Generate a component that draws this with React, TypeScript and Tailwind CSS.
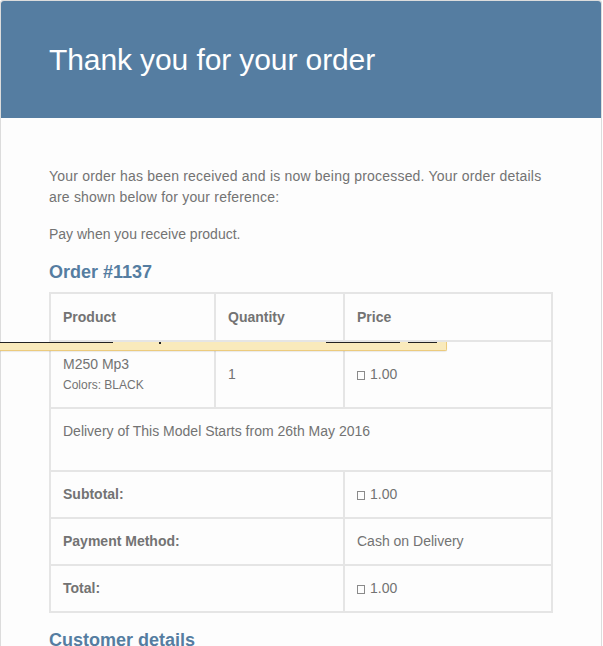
import React from "react";

const cell = "border border-[#e5e5e5] px-3 py-3 text-left align-middle";

function Cur() {
  return (
    <span className="inline-block w-[8px] h-[9px] border border-[#8a8a8a] mr-[5px] align-[-1px]" />
  );
}

export default function App() {
  return (
    <div className="relative w-[603px] h-[646px] overflow-hidden bg-white font-['Liberation_Sans',Arial,sans-serif] text-[#737373]">
      {/* Email container */}
      <div className="w-[602px] border-x border-t border-[#dcdcdc] rounded-t-[3px] bg-[#fdfdfd]">
        {/* Header */}
        <div className="bg-[#557da1] px-12 py-9 rounded-t-[3px]">
          <h1 className="text-[30px] leading-[45px] font-light text-white tracking-[-0.1px]">
            Thank you for your order
          </h1>
        </div>

        {/* Body */}
        <div className="px-12 pt-12 text-[14px] leading-[21px]">
          <p className="mb-4 tracking-[0.2px]">
            Your order has been received and is now being processed. Your order
            details are shown below for your reference:
          </p>
          <p className="mb-4">Pay when you receive product.</p>

          <h2 className="text-[18px] leading-[23px] font-bold text-[#557da1] mb-[8px]">
            Order #1137
          </h2>

          <table className="w-[504px] border-separate border-spacing-0 border border-[#e5e5e5] table-fixed">
            <colgroup>
              <col className="w-[165px]" />
              <col className="w-[129px]" />
              <col className="w-[208px]" />
            </colgroup>
            <thead>
              <tr>
                <th className={cell + " font-bold pt-[13px]"}>Product</th>
                <th className={cell + " font-bold pt-[13px]"}>Quantity</th>
                <th className={cell + " font-bold pt-[13px]"}>Price</th>
              </tr>
            </thead>
            <tbody>
              <tr>
                <td className={cell}>
                  M250 Mp3
                  <br />
                  <small className="block text-[12px] leading-[20px]">
                    Colors: BLACK
                  </small>
                </td>
                <td className={cell}>1</td>
                <td className={cell}>
                  <Cur />
                  1.00
                </td>
              </tr>
              <tr>
                <td colSpan={3} className={cell + " pb-[28px]"}>
                  Delivery of This Model Starts from 26th May 2016
                </td>
              </tr>
            </tbody>
            <tfoot>
              <tr>
                <th colSpan={2} className={cell + " font-bold"}>
                  Subtotal:
                </th>
                <td className={cell}>
                  <Cur />
                  1.00
                </td>
              </tr>
              <tr>
                <th colSpan={2} className={cell + " font-bold"}>
                  Payment Method:
                </th>
                <td className={cell}>Cash on Delivery</td>
              </tr>
              <tr>
                <th colSpan={2} className={cell + " font-bold"}>
                  Total:
                </th>
                <td className={cell}>
                  <Cur />
                  1.00
                </td>
              </tr>
            </tfoot>
          </table>

          <h2 className="text-[18px] leading-[23px] font-bold text-[#557da1] mt-4">
            Customer details
          </h2>
        </div>
      </div>

      {/* Yellow notification strip over the table */}
      <div className="absolute left-0 top-[342px] w-[447px] h-[9px] bg-[#f9eabc] border-b border-r border-[#eccb7d] rounded-br-[2px] shadow-[0_1px_1px_rgba(0,0,0,0.08)]">
        <div className="absolute top-0 left-0 w-[113px] h-px bg-[#222]" />
        <div className="absolute top-0 left-[159px] w-[2px] h-[2px] bg-[#222]" />
        <div className="absolute top-0 left-[326px] w-[74px] h-px bg-[#222]" />
        <div className="absolute top-0 left-[408px] w-[29px] h-px bg-[#222]" />
      </div>
    </div>
  );
}
